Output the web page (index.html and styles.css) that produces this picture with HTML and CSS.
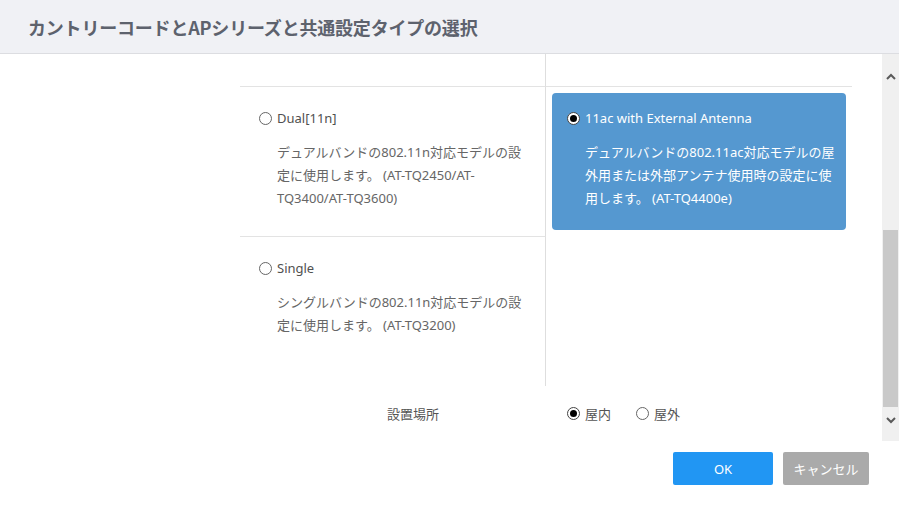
FILE: index.html
```html
<!DOCTYPE html>
<html lang="ja">
<head>
    <meta charset="UTF-8">
    <meta name="viewport" content="width=device-width, initial-scale=1.0">
    <title>カントリーコードとAPシリーズと共通設定タイプの選択</title>
    <link rel="stylesheet" href="styles.css">
</head>
<body>
    <div class="dialog">
        <!-- Header -->
        <div class="dialog-header">
            <h1 class="dialog-title">カントリーコードとAPシリーズと共通設定タイプの選択</h1>
        </div>

        <!-- Scrollable body -->
        <div class="dialog-body">
            <div class="scroll-content">
                <div class="type-grid">
                    <!-- previous row, scrolled above the view -->
                    <div class="type-item type-prev col-left"></div>
                    <div class="type-item type-prev"></div>

                    <div class="type-item col-left">
                        <div class="type-box">
                            <div class="type-label"><span class="radio"></span>Dual[11n]</div>
                            <p class="type-desc">デュアルバンドの802.11n対応モデルの設定に使用します。 (AT-TQ2450/AT-TQ3400/AT-TQ3600)</p>
                        </div>
                    </div>
                    <div class="type-item">
                        <div class="type-box selected">
                            <div class="type-label"><span class="radio checked"></span>11ac with External Antenna</div>
                            <p class="type-desc">デュアルバンドの802.11ac対応モデルの屋外用または外部アンテナ使用時の設定に使用します。 (AT-TQ4400e)</p>
                        </div>
                    </div>

                    <div class="type-item col-left">
                        <div class="type-box">
                            <div class="type-label"><span class="radio"></span>Single</div>
                            <p class="type-desc">シングルバンドの802.11n対応モデルの設定に使用します。 (AT-TQ3200)</p>
                        </div>
                    </div>
                </div>

                <!-- Location row -->
                <div class="form-row">
                    <div class="form-label">設置場所</div>
                    <div class="radio-group">
                        <label class="radio-option"><span class="radio checked"></span>屋内</label>
                        <label class="radio-option"><span class="radio"></span>屋外</label>
                    </div>
                </div>
            </div>

            <!-- Scrollbar -->
            <div class="scrollbar">
                <div class="sb-arrow sb-up">
                    <svg width="10" height="7" viewBox="0 0 10 7"><polyline points="1,6 5,2 9,6" fill="none" stroke="#5a5a5a" stroke-width="2"/></svg>
                </div>
                <div class="sb-space"></div>
                <div class="sb-thumb"></div>
                <div class="sb-arrow sb-down">
                    <svg width="10" height="7" viewBox="0 0 10 7"><polyline points="1,1 5,5 9,1" fill="none" stroke="#5a5a5a" stroke-width="2"/></svg>
                </div>
            </div>
        </div>

        <!-- Footer -->
        <div class="dialog-footer">
            <button class="btn btn-primary">OK</button>
            <button class="btn btn-cancel">キャンセル</button>
        </div>
    </div>
</body>
</html>
```

FILE: styles.css
```css
body {
    margin: 0;
    padding: 0;
    font-family: 'Noto Sans', 'Noto Sans CJK JP', sans-serif;
    background: #fff;
    color: #444;
}

.dialog {
    width: 899px;
    height: 510px;
    display: flex;
    flex-direction: column;
    overflow: hidden;
}

/* Header */
.dialog-header {
    height: 53px;
    background: #f0f1f5;
    border-bottom: 1px solid #dcdde1;
    display: flex;
    align-items: center;
    padding-left: 28px;
    flex-shrink: 0;
}

.dialog-title {
    margin: 0;
    font-family: 'Noto Sans CJK JP', sans-serif;
    font-size: 18px;
    font-weight: bold;
    color: #5d626d;
    letter-spacing: -0.2px;
}

/* Body */
.dialog-body {
    height: 387px;
    display: flex;
    flex-shrink: 0;
}

.scroll-content {
    flex: 1;
    overflow: hidden;
}

.type-grid {
    display: grid;
    grid-template-columns: 306px 306px;
    margin-left: 240px;
}

.type-item {
    border-top: 1px solid #e3e3e3;
    min-height: 150px;
    box-sizing: border-box;
}

.type-item.type-prev {
    border-top: none;
    min-height: 32px;
}

.col-left {
    border-right: 1px solid #dedede;
}

.type-box {
    margin: 6px;
    padding: 14px 8px 20px 13px;
    border-radius: 4px;
}

.type-box.selected {
    background: #5598d0;
    color: #fff;
    padding-left: 15px;
}

.type-label {
    display: flex;
    align-items: center;
    font-size: 13px;
    line-height: 23px;
    color: #505050;
}

.selected .type-label {
    color: #fff;
}

.type-desc {
    margin: 11px 0 0 18px;
    font-size: 13px;
    line-height: 23px;
    color: #666;
}

.selected .type-desc {
    color: #fff;
}

/* Radios */
.radio {
    width: 11px;
    height: 11px;
    border: 1px solid #666;
    border-radius: 50%;
    background: #fff;
    margin-right: 5px;
    position: relative;
    flex-shrink: 0;
}

.radio.checked {
    border-color: #444;
}

.radio.checked::after {
    content: '';
    position: absolute;
    left: 2px;
    top: 2px;
    width: 7px;
    height: 7px;
    border-radius: 50%;
    background: #000;
}

/* Location row */
.form-row {
    height: 54px;
    display: flex;
    align-items: center;
    padding-left: 387px;
    font-size: 13px;
}

.form-label {
    width: 180px;
    color: #555;
}

.radio-group {
    display: flex;
    gap: 25px;
}

.radio-option {
    display: flex;
    align-items: center;
    color: #555;
}

/* Scrollbar */
.scrollbar {
    width: 17px;
    background: #f0f0f0;
    display: flex;
    flex-direction: column;
    align-items: center;
    padding-bottom: 7px;
    box-sizing: border-box;
}

.sb-arrow {
    display: flex;
    align-items: center;
    justify-content: center;
    width: 17px;
}

.sb-up {
    height: 44px;
}

.sb-down {
    height: 27px;
}

.sb-space {
    flex: 1;
}

.sb-thumb {
    width: 15px;
    height: 177px;
    background: #c9c9c9;
}

/* Footer */
.dialog-footer {
    flex: 1;
    display: flex;
    justify-content: flex-end;
    align-items: flex-start;
    gap: 10px;
    padding: 11px 30px 0 0;
}

.btn {
    height: 33px;
    border: none;
    border-radius: 2px;
    color: #fff;
    font-family: 'Noto Sans', 'Noto Sans CJK JP', sans-serif;
    font-size: 13px;
    cursor: pointer;
}

.btn-primary {
    width: 100px;
    background: #2196f3;
}

.btn-cancel {
    width: 86px;
    background: #aaaaaa;
}
```
